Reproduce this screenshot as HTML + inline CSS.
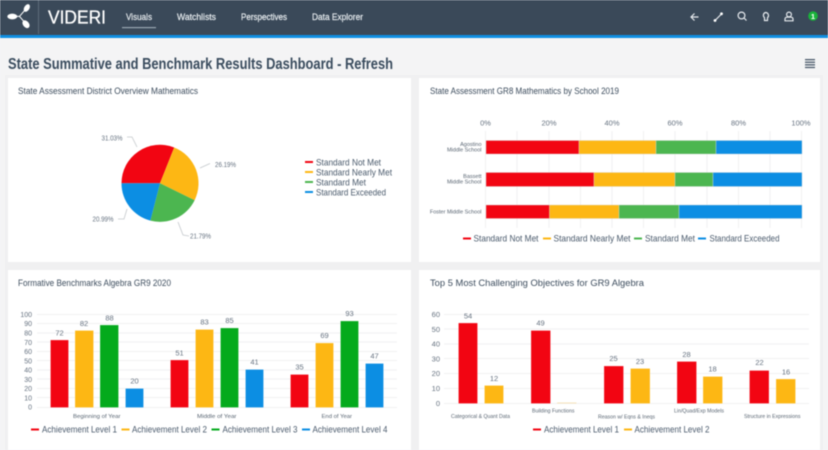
<!DOCTYPE html>
<html><head><meta charset="utf-8"><title>Dashboard</title>
<style>
html,body{margin:0;padding:0;background:#f4f4f5;width:828px;height:450px;overflow:hidden}
svg{display:block;filter:blur(.4px)}
text{font-family:"Liberation Sans",sans-serif}
.t{font-size:9px;fill:#3d4d5e}
.l{font-size:9.5px;fill:#4a5a6c}
.a{font-size:7.5px;fill:#667280}
.s{font-size:5.5px;fill:#5a6673}
.v{font-size:7.5px;fill:#667280;text-anchor:middle}
.y{font-size:7px;fill:#667280;text-anchor:end}
.y2{font-size:7.5px;fill:#667280;text-anchor:end}
.n{font-size:9px;fill:#e8edf0;stroke:#e8edf0;stroke-width:.2}
.g{stroke:#f1f1f2;stroke-width:1}
.ic{fill:none;stroke:#e6eaee;stroke-width:1.2}
.b rect{stroke:#fff;stroke-opacity:.35;stroke-width:.6}
.st rect{stroke:#d8dadc;stroke-opacity:.7;stroke-width:.5}
</style></head><body>
<svg width="828" height="450" viewBox="0 0 828 450" xmlns="http://www.w3.org/2000/svg">
<rect width="828" height="450" fill="#f4f4f5"/>
<rect width="828" height="35" fill="#3a4959"/>
<rect y="35" width="828" height="3" fill="#0f8fe3"/>
<!-- logo -->
<g fill="#fff" stroke="none">
<ellipse cx="12.3" cy="16.5" rx="5" ry="2.9"/>
<ellipse cx="26.8" cy="8" rx="2.6" ry="4.2" transform="rotate(32 26.8 8)"/>
<ellipse cx="26" cy="24.2" rx="3" ry="4.4" transform="rotate(-38 26 24.2)"/>
</g>
<path d="M16 16.4 H19.5 L25 10 M19.5 16.4 L24 21.5" fill="none" stroke="#fff" stroke-width="1"/>
<rect x="38" y="0" width="1" height="34" fill="#5d6b79"/>
<text x="48" y="23.5" font-size="18.5" fill="#fff" stroke="#fff" stroke-width=".3" textLength="58" lengthAdjust="spacingAndGlyphs">VIDERI</text>
<text class="n" x="126" y="20" textLength="26" lengthAdjust="spacingAndGlyphs">Visuals</text>
<rect x="122" y="27" width="34" height="1.2" fill="#9aa7b2"/>
<text class="n" x="177" y="20" textLength="39" lengthAdjust="spacingAndGlyphs">Watchlists</text>
<text class="n" x="241" y="20" textLength="46" lengthAdjust="spacingAndGlyphs">Perspectives</text>
<text class="n" x="312" y="20" textLength="51" lengthAdjust="spacingAndGlyphs">Data Explorer</text>
<!-- header icons -->
<path class="ic" d="M698.500 17 H691.500 M694.500 13.500 L691 17 L694.500 20.500"/>
<path class="ic" d="M715 20.500 L721.500 14"/>
<circle cx="715" cy="20.500" r="1.400" fill="#fff"/><circle cx="721.500" cy="13.800" r="1.400" fill="#fff"/>
<circle class="ic" cx="741.500" cy="15.500" r="3.400"/>
<path class="ic" d="M744 18 L746.500 20.500"/>
<path class="ic" d="M765.500 12.500 a3 3 0 0 1 2 5.200 v2.800 h-3 v-2.800 a3 3 0 0 1 1 -5.200z"/>
<circle class="ic" cx="789" cy="14.500" r="2.400"/>
<path class="ic" d="M785 20.800 v-1.600 q0 -1.800 2 -2 h4 q2 .2 2 2 v1.600z"/>
<circle cx="813" cy="16" r="4.800" fill="#19b23a"/>
<text x="813" y="18.800" font-size="7.500" font-weight="bold" fill="#fff" text-anchor="middle">1</text>
<!-- title -->
<text x="8" y="69" font-size="15.500" font-weight="bold" fill="#3a4c5e" textLength="385" lengthAdjust="spacingAndGlyphs">State Summative and Benchmark Results Dashboard - Refresh</text>
<g fill="#4a5a6a"><rect x="805" y="59" width="10" height="1.300"/><rect x="805" y="61.600" width="10" height="1.300"/><rect x="805" y="64.200" width="10" height="1.300"/><rect x="805" y="66.800" width="10" height="1.300"/></g>
<!-- gutters -->
<rect x="5" y="75" width="818" height="375" fill="#ececee" opacity=".6"/>
<!-- cards -->
<g fill="#fff"><rect x="8" y="78" width="403" height="184"/><rect x="419" y="78" width="401" height="184"/><rect x="8" y="270" width="403" height="180"/><rect x="419" y="270" width="401" height="180"/></g>
<text class="t" x="18" y="94" textLength="180" lengthAdjust="spacingAndGlyphs">State Assessment District Overview Mathematics</text>
<text class="t" x="430" y="94" textLength="189" lengthAdjust="spacingAndGlyphs">State Assessment GR8 Mathematics by School 2019</text>
<text class="t" x="18" y="286" textLength="153" lengthAdjust="spacingAndGlyphs">Formative Benchmarks Algebra GR9 2020</text>
<text class="t" x="430" y="286" textLength="214" lengthAdjust="spacingAndGlyphs">Top 5 Most Challenging Objectives for GR9 Algebra</text>
<!-- pie -->
<path d="M160 183.300 L121.500 183.300 A38.500 38.500 0 0 1 174.200 147.500Z" fill="#f20512"/>
<path d="M160 183.300 L174.200 147.500 A38.500 38.500 0 0 1 194.600 200.200Z" fill="#fdb714"/>
<path d="M160 183.300 L194.600 200.200 A38.500 38.500 0 0 1 150.400 220.600Z" fill="#4cb650"/>
<path d="M160 183.300 L150.400 220.600 A38.500 38.500 0 0 1 121.500 183.300Z" fill="#0c8ee3"/>
<g fill="none" stroke="#c4c8cc" stroke-width=".8"><path d="M127 137 L132 137 L137 147"/><path d="M200 168 L210 163.500"/><path d="M178 222 L183 235 L189 236"/><path d="M118 219 L124 219 L127 209"/></g>
<text class="a" x="101.500" y="140.500" textLength="21" lengthAdjust="spacingAndGlyphs">31.03%</text>
<text class="a" x="215" y="167" textLength="21" lengthAdjust="spacingAndGlyphs">26.19%</text>
<text class="a" x="190" y="238.500" textLength="21" lengthAdjust="spacingAndGlyphs">21.79%</text>
<text class="a" x="92.500" y="221.500" textLength="21" lengthAdjust="spacingAndGlyphs">20.99%</text>
<rect x="305" y="161" width="8" height="2" fill="#f20512"/><rect x="305" y="171" width="8" height="2" fill="#fdb714"/><rect x="305" y="181" width="8" height="2" fill="#4cb650"/><rect x="305" y="191" width="8" height="2" fill="#0c8ee3"/>
<text class="l" x="316" y="165.500" textLength="65" lengthAdjust="spacingAndGlyphs">Standard Not Met</text>
<text class="l" x="316" y="175.500" textLength="76" lengthAdjust="spacingAndGlyphs">Standard Nearly Met</text>
<text class="l" x="316" y="185.500" textLength="50" lengthAdjust="spacingAndGlyphs">Standard Met</text>
<text class="l" x="316" y="195.500" textLength="70" lengthAdjust="spacingAndGlyphs">Standard Exceeded</text>
<!-- stacked bar -->
<g class="g"><path d="M485.500 131V228M517 131V228M549 131V228M580.500 131V228M612 131V228M643.500 131V228M675 131V228M707 131V228M738.500 131V228M770 131V228M801.500 131V228"/></g>
<text class="a" x="485.500" y="125.500" text-anchor="middle">0%</text><text class="a" x="549" y="125.500" text-anchor="middle">20%</text><text class="a" x="612" y="125.500" text-anchor="middle">40%</text><text class="a" x="675" y="125.500" text-anchor="middle">60%</text><text class="a" x="738.500" y="125.500" text-anchor="middle">80%</text><text class="a" x="801" y="125.500" text-anchor="middle">100%</text>
<g class="st"><rect x="486" y="140.500" width="93" height="13.500" fill="#f20512"/><rect x="579" y="140.500" width="77" height="13.500" fill="#fdb714"/><rect x="656" y="140.500" width="60" height="13.500" fill="#4cb650"/><rect x="716" y="140.500" width="86" height="13.500" fill="#0c8ee3"/>
<rect x="486" y="172.500" width="108" height="14" fill="#f20512"/><rect x="594" y="172.500" width="81" height="14" fill="#fdb714"/><rect x="675" y="172.500" width="38" height="14" fill="#4cb650"/><rect x="713" y="172.500" width="89" height="14" fill="#0c8ee3"/>
<rect x="486" y="205" width="63.500" height="13.500" fill="#f20512"/><rect x="549.500" y="205" width="69.500" height="13.500" fill="#fdb714"/><rect x="619" y="205" width="60" height="13.500" fill="#4cb650"/><rect x="679" y="205" width="123" height="13.500" fill="#0c8ee3"/></g>
<text class="s" x="481.500" y="146" text-anchor="end">Agostino</text><text class="s" x="481.500" y="151.500" text-anchor="end">Middle School</text><text class="s" x="481.500" y="178" text-anchor="end">Bassett</text><text class="s" x="481.500" y="183.500" text-anchor="end">Middle School</text><text class="s" x="481.500" y="213.500" text-anchor="end">Foster Middle School</text>
<rect x="463" y="237.500" width="8" height="2" fill="#f20512"/><rect x="543" y="237.500" width="8" height="2" fill="#fdb714"/><rect x="634" y="237.500" width="8" height="2" fill="#4cb650"/><rect x="698" y="237.500" width="8" height="2" fill="#0c8ee3"/>
<text class="l" x="473.500" y="241.500" textLength="65" lengthAdjust="spacingAndGlyphs">Standard Not Met</text>
<text class="l" x="553.500" y="241.500" textLength="77" lengthAdjust="spacingAndGlyphs">Standard Nearly Met</text>
<text class="l" x="645" y="241.500" textLength="50" lengthAdjust="spacingAndGlyphs">Standard Met</text>
<text class="l" x="709.500" y="241.500" textLength="70" lengthAdjust="spacingAndGlyphs">Standard Exceeded</text>
<!-- bottom-left -->
<g class="g"><path d="M37 314.500H397M37 323.500H397M37 333H397M37 342H397M37 351.500H397M37 360.500H397M37 370H397M37 379H397M37 388.500H397M37 397.500H397M37 407.500H397"/></g>
<text class="y" x="32" y="317">100</text><text class="y" x="32" y="326">90</text><text class="y" x="32" y="335.500">80</text><text class="y" x="32" y="345">70</text><text class="y" x="32" y="354">60</text><text class="y" x="32" y="363.500">50</text><text class="y" x="32" y="372.500">40</text><text class="y" x="32" y="382">30</text><text class="y" x="32" y="391">20</text><text class="y" x="32" y="400.500">10</text><text class="y" x="32" y="409.500">0</text>
<g class="b"><rect x="50.500" y="340" width="18" height="67.500" fill="#f20512"/><rect x="75" y="330.500" width="18.500" height="77" fill="#fdb714"/><rect x="100" y="325" width="18.500" height="82.500" fill="#04aa1c"/><rect x="125.500" y="388.500" width="18" height="19" fill="#0c8ee3"/>
<rect x="170.500" y="360" width="18" height="47.500" fill="#f20512"/><rect x="195.500" y="329.500" width="18" height="78" fill="#fdb714"/><rect x="220.500" y="328" width="18" height="79.500" fill="#04aa1c"/><rect x="245.500" y="369.500" width="18" height="38" fill="#0c8ee3"/>
<rect x="290.500" y="374.500" width="18" height="33" fill="#f20512"/><rect x="315.500" y="343" width="18" height="64.500" fill="#fdb714"/><rect x="340.500" y="321" width="18" height="86.500" fill="#04aa1c"/><rect x="365.500" y="363.500" width="18" height="44" fill="#0c8ee3"/></g>
<text class="v" x="59.500" y="335.500">72</text><text class="v" x="84" y="326">82</text><text class="v" x="109.500" y="320.500">88</text><text class="v" x="134.500" y="383.500">20</text><text class="v" x="179.500" y="355.500">51</text><text class="v" x="204.500" y="324.500">83</text><text class="v" x="229.500" y="323">85</text><text class="v" x="254.500" y="364.500">41</text><text class="v" x="299.500" y="369.500">35</text><text class="v" x="324.500" y="338">69</text><text class="v" x="349.500" y="316">93</text><text class="v" x="374.500" y="358.500">47</text>
<text class="s" x="73" y="418" textLength="47.500" lengthAdjust="spacingAndGlyphs">Beginning of Year</text>
<text class="s" x="197" y="418" textLength="39.500" lengthAdjust="spacingAndGlyphs">Middle of Year</text>
<text class="s" x="321.500" y="418" textLength="30.500" lengthAdjust="spacingAndGlyphs">End of Year</text>
<rect x="31" y="428.500" width="8" height="2" fill="#f20512"/><rect x="121.500" y="428.500" width="8" height="2" fill="#fdb714"/><rect x="211.500" y="428.500" width="8" height="2" fill="#04aa1c"/><rect x="302" y="428.500" width="8" height="2" fill="#0c8ee3"/>
<text class="l" x="42" y="432.500" textLength="75" lengthAdjust="spacingAndGlyphs">Achievement Level 1</text>
<text class="l" x="132" y="432.500" textLength="75" lengthAdjust="spacingAndGlyphs">Achievement Level 2</text>
<text class="l" x="222.500" y="432.500" textLength="75" lengthAdjust="spacingAndGlyphs">Achievement Level 3</text>
<text class="l" x="312.500" y="432.500" textLength="75" lengthAdjust="spacingAndGlyphs">Achievement Level 4</text>
<!-- bottom-right -->
<g class="g"><path d="M444 314.500H809M444 329H809M444 344H809M444 358.500H809M444 373.500H809M444 388.500H809M444 403.500H809"/></g>
<text class="y2" x="440" y="317">60</text><text class="y2" x="440" y="332">50</text><text class="y2" x="440" y="346.500">40</text><text class="y2" x="440" y="361.500">30</text><text class="y2" x="440" y="376">20</text><text class="y2" x="440" y="391">10</text><text class="y2" x="440" y="406">0</text>
<g class="b"><rect x="458.500" y="323" width="19" height="80.500" fill="#f20512"/><rect x="484.500" y="385.500" width="19" height="18" fill="#fdb714"/><rect x="531" y="330.500" width="19.500" height="73" fill="#f20512"/><rect x="557" y="402.500" width="19.500" height="1" fill="#f3d9a6"/><rect x="604" y="366" width="19.500" height="37.500" fill="#f20512"/><rect x="630.500" y="368.500" width="19.500" height="35" fill="#fdb714"/><rect x="677" y="361.500" width="19.500" height="42" fill="#f20512"/><rect x="703" y="376.500" width="19.500" height="27" fill="#fdb714"/><rect x="749.500" y="370.500" width="19.500" height="33" fill="#f20512"/><rect x="776" y="379" width="19.500" height="24.500" fill="#fdb714"/></g>
<text class="v" x="468" y="318.500">54</text><text class="v" x="494" y="381">12</text><text class="v" x="540.500" y="325.500">49</text><text class="v" x="613.500" y="361">25</text><text class="v" x="640" y="364">23</text><text class="v" x="686.500" y="357">28</text><text class="v" x="712.500" y="371.500">18</text><text class="v" x="759.500" y="365">22</text><text class="v" x="786" y="374.500">16</text>
<text class="s" x="451" y="418" textLength="59" lengthAdjust="spacingAndGlyphs">Categorical &amp; Quant Data</text>
<text class="s" x="532" y="412.500" textLength="42.500" lengthAdjust="spacingAndGlyphs">Building Functions</text>
<text class="s" x="598" y="418.500" textLength="57" lengthAdjust="spacingAndGlyphs">Reason w/ Eqns &amp; Ineqs</text>
<text class="s" x="674" y="412.500" textLength="50" lengthAdjust="spacingAndGlyphs">Lin/Quad/Exp Models</text>
<text class="s" x="744" y="418" textLength="56.500" lengthAdjust="spacingAndGlyphs">Structure in Expressions</text>
<rect x="533" y="428.500" width="8" height="2" fill="#f20512"/><rect x="624" y="428.500" width="8" height="2" fill="#fdb714"/>
<text class="l" x="544" y="432.500" textLength="75" lengthAdjust="spacingAndGlyphs">Achievement Level 1</text>
<text class="l" x="634.500" y="432.500" textLength="75" lengthAdjust="spacingAndGlyphs">Achievement Level 2</text>
</svg>
</body></html>
